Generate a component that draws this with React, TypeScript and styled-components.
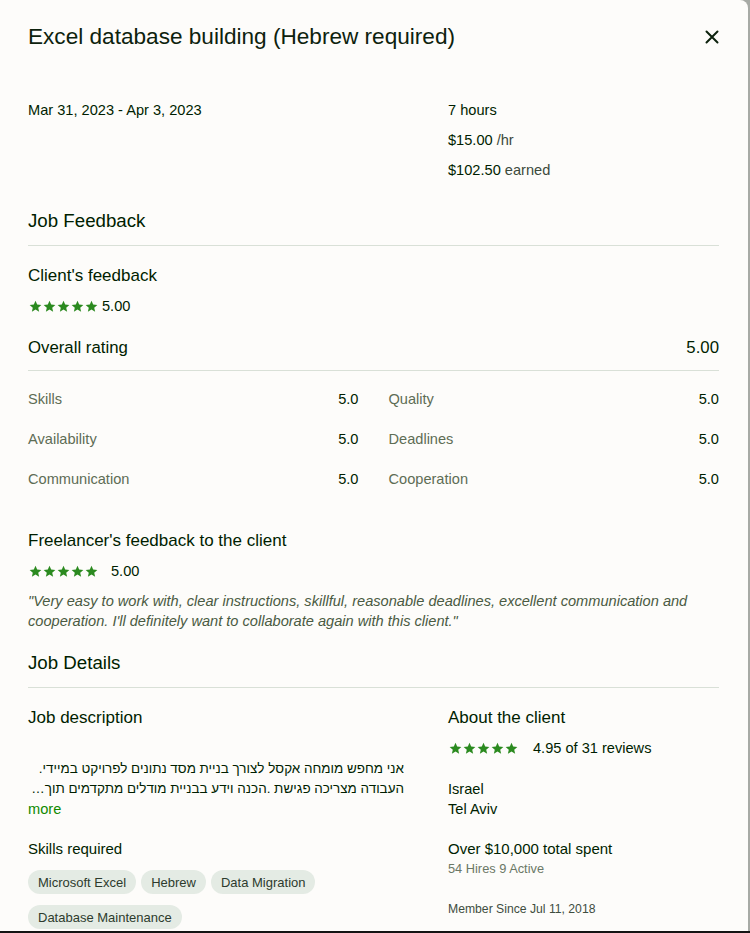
import styled, { createGlobalStyle } from 'styled-components'

const GlobalStyle = createGlobalStyle`
  html, body {
    margin: 0;
    padding: 0;
    background: #a7aaa5;
  }
  body {
    font-family: "Liberation Sans", Arial, sans-serif;
    color: #001e00;
    -webkit-font-smoothing: antialiased;
  }
  * { box-sizing: border-box; }
`

const Page = styled.div`
  height: 933px;
  border-bottom: 2px solid #141414;
  overflow: hidden;
`

const Modal = styled.div`
  width: 748px;
  height: 931px;
  background: #fdfcfa;
  border-top-right-radius: 8px;
  padding: 22px 29px 0 28px;
  overflow: hidden;
`

const Header = styled.header`
  display: flex;
  align-items: center;
  justify-content: space-between;
`

const Title = styled.h1`
  margin: 0;
  font-size: 22.6px;
  line-height: 30px;
  font-weight: 400;
  color: #0d220d;
`

const CloseButton = styled.button`
  border: 0;
  background: none;
  padding: 0;
  width: 14px;
  height: 14px;
  display: flex;
  cursor: pointer;
  color: #0d220d;
`

const Summary = styled.div`
  display: grid;
  grid-template-columns: 420px 1fr;
  margin-top: 43px;
  font-size: 14.6px;
  line-height: 30px;
`

const Stack = styled.div`
  display: flex;
  flex-direction: column;
`

const Unit = styled.span`
  color: #3c4a3c;
`

const SectionTitle = styled.h2`
  margin: ${p => p.$top}px 0 0;
  padding-bottom: 12px;
  border-bottom: 1px solid #d9e0d7;
  font-size: 18.7px;
  line-height: 24px;
  font-weight: 400;
`

const SubTitle = styled.h3`
  margin: ${p => p.$top}px 0 0;
  font-size: 17px;
  line-height: 22px;
  font-weight: 400;
`

const StarRow = styled.div`
  display: flex;
  align-items: center;
  height: 20px;
  margin-top: ${p => p.$top ?? 9}px;
  font-size: 14.6px;
`

const Stars = styled.span`
  display: inline-flex;
  gap: 1px;
  margin-right: ${p => p.$gap}px;
  margin-left: 1px;
`

const OverallRow = styled.div`
  display: flex;
  justify-content: space-between;
  margin-top: 21px;
  padding-bottom: 11px;
  border-bottom: 1px solid #d9e0d7;
  font-size: 16.8px;
  line-height: 22px;
`

const RatingGrid = styled.div`
  display: grid;
  grid-template-columns: 1fr 1fr;
  column-gap: 30px;
  margin-top: 8px;
`

const RatingItem = styled.div`
  display: flex;
  justify-content: space-between;
  align-items: center;
  height: 40px;
  font-size: 14.6px;
`

const RatingLabel = styled.span`
  color: #5e6d55;
`

const Quote = styled.p`
  margin: 10px 0 0;
  font-size: 14.6px;
  line-height: 20px;
  font-style: italic;
  color: #4a5a42;
`

const Details = styled.div`
  display: grid;
  grid-template-columns: 376px 1fr;
  column-gap: 44px;
`

const Description = styled.p`
  margin: 30px 0 0;
  font-size: 13.45px;
  line-height: 20px;
  display: -webkit-box;
  -webkit-line-clamp: 2;
  -webkit-box-orient: vertical;
  overflow: hidden;
`

const MoreLink = styled.a`
  display: block;
  font-size: 14.6px;
  line-height: 20px;
  color: #108a00;
  text-decoration: none;
`

const SmallTitle = styled.div`
  margin-top: ${p => p.$top}px;
  font-size: 15px;
  line-height: 20px;
`

const Chips = styled.div`
  display: flex;
  flex-wrap: wrap;
  gap: 11px 5px;
  margin-top: 11px;
`

const Chip = styled.span`
  display: inline-flex;
  align-items: center;
  height: 24px;
  padding: 0 10px;
  border-radius: 12px;
  background: #e4ebe4;
  color: #2d3b2d;
  font-size: 13px;
`

const InfoLine = styled.div`
  margin-top: ${p => p.$top ?? 0}px;
  font-size: ${p => p.$size ?? 14.6}px;
  line-height: 20px;
`

const Muted = styled.div`
  margin-top: ${p => p.$top}px;
  font-size: ${p => p.$size}px;
  line-height: 18px;
  color: ${p => p.$dark ? '#3f4d3f' : '#6b7866'};
`

function Star() {
  return (
    <svg width="13" height="13" viewBox="0 0 24 24" fill="#2b8a1f">
      <path d="M12 1.2l3.1 7.1 7.7.7-5.8 5.1 1.7 7.6L12 17.7l-6.7 4 1.7-7.6-5.8-5.1 7.7-.7z" />
    </svg>
  )
}

function StarSet({ gap }: { gap: number }) {
  return (
    <Stars $gap={gap}>
      {[0, 1, 2, 3, 4].map(i => <Star key={i} />)}
    </Stars>
  )
}

const ratings = [
  ['Skills', '5.0'],
  ['Quality', '5.0'],
  ['Availability', '5.0'],
  ['Deadlines', '5.0'],
  ['Communication', '5.0'],
  ['Cooperation', '5.0'],
]

const skills = ['Microsoft Excel', 'Hebrew', 'Data Migration', 'Database Maintenance']

export default function App() {
  return (
    <>
      <GlobalStyle />
      <Page>
        <Modal>
          <Header>
            <Title>Excel database building (Hebrew required)</Title>
            <CloseButton aria-label="Close">
              <svg width="14" height="14" viewBox="0 0 14 14" stroke="currentColor" strokeWidth="2" strokeLinecap="round">
                <path d="M1.5 1.5l11 11M12.5 1.5l-11 11" />
              </svg>
            </CloseButton>
          </Header>

          <Summary>
            <div>Mar 31, 2023 - Apr 3, 2023</div>
            <Stack>
              <div>7 hours</div>
              <div>$15.00 <Unit>/hr</Unit></div>
              <div>$102.50 <Unit>earned</Unit></div>
            </Stack>
          </Summary>

          <SectionTitle $top={24}>Job Feedback</SectionTitle>
          <SubTitle $top={19}>Client's feedback</SubTitle>
          <StarRow>
            <StarSet gap={4} />
            5.00
          </StarRow>

          <OverallRow>
            <span>Overall rating</span>
            <span>5.00</span>
          </OverallRow>
          <RatingGrid>
            {ratings.map(([label, value]) => (
              <RatingItem key={label}>
                <RatingLabel>{label}</RatingLabel>
                <span>{value}</span>
              </RatingItem>
            ))}
          </RatingGrid>

          <SubTitle $top={31}>Freelancer's feedback to the client</SubTitle>
          <StarRow>
            <StarSet gap={13} />
            5.00
          </StarRow>
          <Quote>
            "Very easy to work with, clear instructions, skillful, reasonable deadlines, excellent communication and
            cooperation. I'll definitely want to collaborate again with this client."
          </Quote>

          <SectionTitle $top={20}>Job Details</SectionTitle>
          <Details>
            <div>
              <SubTitle $top={19}>Job description</SubTitle>
              <Description dir="rtl">
                אני מחפש מומחה אקסל לצורך בניית מסד נתונים לפרויקט במיידי. העבודה מצריכה פגישת .הכנה וידע בבניית מודלים מתקדמים תוך עבודה מול צוות הפיתוח ובניית דוחות מותאמים
              </Description>
              <MoreLink href="#">more</MoreLink>
              <SmallTitle $top={20}>Skills required</SmallTitle>
              <Chips>
                {skills.map(s => <Chip key={s}>{s}</Chip>)}
              </Chips>
            </div>
            <div>
              <SubTitle $top={19}>About the client</SubTitle>
              <StarRow>
                <StarSet gap={15} />
                4.95 of 31 reviews
              </StarRow>
              <InfoLine $top={21}>Israel</InfoLine>
              <InfoLine>Tel Aviv</InfoLine>
              <InfoLine $top={20} $size={15}>Over $10,000 total spent</InfoLine>
              <Muted $top={1} $size={12.8}>54 Hires 9 Active</Muted>
              <Muted $top={22} $size={12.2} $dark>Member Since Jul 11, 2018</Muted>
            </div>
          </Details>
        </Modal>
      </Page>
    </>
  )
}
